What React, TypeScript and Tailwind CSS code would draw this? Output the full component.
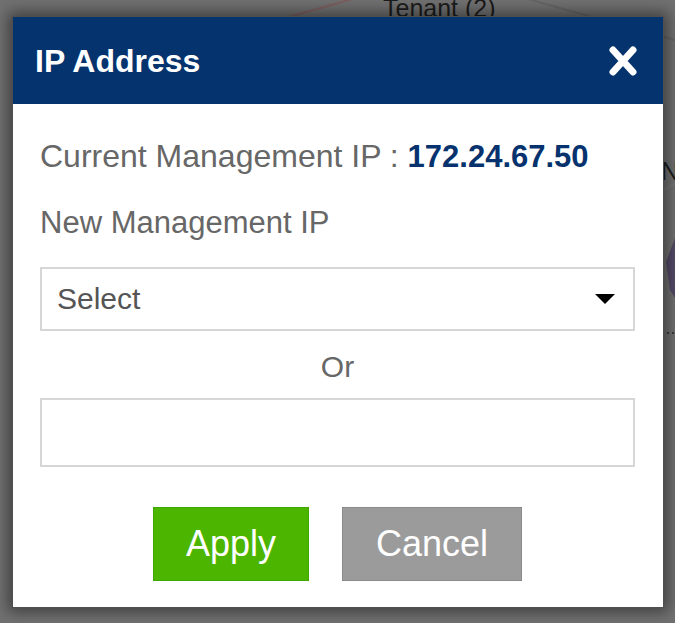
import { useState } from 'react';

function CloseIcon() {
  return (
    <svg width="28" height="30" viewBox="0 0 28 30" aria-hidden="true">
      <path d="M4 4 L24 26 M24 4 L4 26" stroke="#ffffff" strokeWidth="7" strokeLinecap="round" />
    </svg>
  );
}

function Caret() {
  return (
    <svg width="20" height="10" viewBox="0 0 20 10" aria-hidden="true">
      <polygon points="0,0 20,0 10,10" fill="#000000" />
    </svg>
  );
}

function Backdrop() {
  return (
    <>
      <svg className="absolute inset-0" width="675" height="623" viewBox="0 0 675 623" aria-hidden="true">
        <line x1="278" y1="20" x2="356" y2="-2" stroke="#7d5f5f" strokeWidth="2" />
        <line x1="524" y1="-2" x2="675" y2="40" stroke="#666666" strokeWidth="2" />
        <line x1="663" y1="190" x2="675" y2="184" stroke="#777777" strokeWidth="2" />
        <polygon points="666,262 675,238 675,298 670,290" fill="#554a68" />
        <line x1="662" y1="333" x2="675" y2="333" stroke="#3a3a3a" strokeWidth="2" strokeDasharray="2 3" />
      </svg>
      <span className="absolute left-[383px] top-[-7px] text-[25px] leading-[30px] text-[#1c1c1c]">Tenant (2)</span>
      <span className="absolute left-[661px] top-[156px] text-[25px] leading-[30px] text-[#1c1c1c]">Ne</span>
    </>
  );
}

export default function App() {
  const [ip, setIp] = useState('');

  return (
    <div className="relative h-[623px] w-[675px] overflow-hidden bg-[#717171] font-['Liberation_Sans',Arial,sans-serif]">
      <Backdrop />

      <div className="absolute left-[12px] top-[16px] flex w-[652px] flex-col border border-[#4f4f4f] bg-white shadow-[0_0_14px_4px_rgba(0,0,0,0.45)]">
        <div className="flex h-[87px] items-center justify-between bg-[#05336e] pl-[22px] pr-[26px]">
          <h1 className="text-[32px] font-bold leading-[36px] text-white">IP Address</h1>
          <button className="flex items-center" aria-label="Close">
            <CloseIcon />
          </button>
        </div>

        <div className="flex flex-col pl-[27px] pr-[28px] pt-[34px] pb-[26px]">
          <p className="text-[32px] leading-[36px] text-[#676767]">
            Current Management IP : <span className="text-[31px] font-bold text-[#06336e]">172.24.67.50</span>
          </p>
          <p className="mt-[30px] text-[31px] leading-[36px] text-[#676767]">New Management IP</p>

          <div className="mt-[26px] flex h-[64px] items-center justify-between border-2 border-[#d6d6d6] pl-[15px] pr-[18px]">
            <span className="text-[30px] leading-[36px] text-[#555555]">Select</span>
            <Caret />
          </div>

          <p className="mt-[18px] text-center text-[30px] leading-[36px] text-[#676767]">Or</p>

          <input
            value={ip}
            onChange={(e) => setIp(e.target.value)}
            className="mt-[13px] h-[69px] w-full border-2 border-[#d6d6d6] px-[16px] text-[30px] text-[#555555] outline-none"
          />

          <div className="mt-[40px] flex justify-center gap-[33px]">
            <button className="h-[74px] w-[156px] border border-[#3fa500] bg-[#4cb500] text-[36px] leading-[40px] text-white">
              Apply
            </button>
            <button className="h-[74px] w-[180px] border border-[#8b8b8b] bg-[#9b9b9b] text-[36px] leading-[40px] text-white">
              Cancel
            </button>
          </div>
        </div>
      </div>
    </div>
  );
}
